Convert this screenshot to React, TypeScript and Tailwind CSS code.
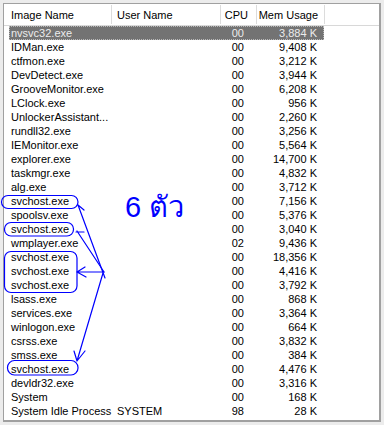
import React from 'react';

type Proc = { name: string; user?: string; cpu: string; mem: string };

const procs: Proc[] = [
  { name: 'nvsvc32.exe', cpu: '00', mem: '3,884 K' },
  { name: 'IDMan.exe', cpu: '00', mem: '9,408 K' },
  { name: 'ctfmon.exe', cpu: '00', mem: '3,212 K' },
  { name: 'DevDetect.exe', cpu: '00', mem: '3,944 K' },
  { name: 'GrooveMonitor.exe', cpu: '00', mem: '6,208 K' },
  { name: 'LClock.exe', cpu: '00', mem: '956 K' },
  { name: 'UnlockerAssistant...', cpu: '00', mem: '2,260 K' },
  { name: 'rundll32.exe', cpu: '00', mem: '3,256 K' },
  { name: 'IEMonitor.exe', cpu: '00', mem: '5,564 K' },
  { name: 'explorer.exe', cpu: '00', mem: '14,700 K' },
  { name: 'taskmgr.exe', cpu: '00', mem: '4,832 K' },
  { name: 'alg.exe', cpu: '00', mem: '3,712 K' },
  { name: 'svchost.exe', cpu: '00', mem: '7,156 K' },
  { name: 'spoolsv.exe', cpu: '00', mem: '5,376 K' },
  { name: 'svchost.exe', cpu: '00', mem: '3,040 K' },
  { name: 'wmplayer.exe', cpu: '02', mem: '9,436 K' },
  { name: 'svchost.exe', cpu: '00', mem: '18,356 K' },
  { name: 'svchost.exe', cpu: '00', mem: '4,416 K' },
  { name: 'svchost.exe', cpu: '00', mem: '3,792 K' },
  { name: 'lsass.exe', cpu: '00', mem: '868 K' },
  { name: 'services.exe', cpu: '00', mem: '3,364 K' },
  { name: 'winlogon.exe', cpu: '00', mem: '664 K' },
  { name: 'csrss.exe', cpu: '00', mem: '3,832 K' },
  { name: 'smss.exe', cpu: '00', mem: '384 K' },
  { name: 'svchost.exe', cpu: '00', mem: '4,476 K' },
  { name: 'devldr32.exe', cpu: '00', mem: '3,316 K' },
  { name: 'System', cpu: '00', mem: '168 K' },
  { name: 'System Idle Process', user: 'SYSTEM', cpu: '98', mem: '28 K' },
];

// hand-drawn markup on top of the list
const Annotations = () => (
  <svg className="absolute left-0 top-0 pointer-events-none" width="384" height="425" viewBox="0 0 384 425">
    <g fill="none" stroke="#0000ff" strokeWidth="1.2" strokeLinecap="round" strokeLinejoin="round">
      <rect x="1.5" y="195.5" width="76.5" height="13" rx="6.5" />
      <rect x="4.5" y="222.5" width="69" height="13.5" rx="6.5" />
      <rect x="4.5" y="251.5" width="72.5" height="41" rx="6.5" />
      <rect x="7.5" y="360.5" width="70.5" height="14.5" rx="7" />

      <path d="M105 278 L78 205 M78 205 L84 210" />
      <path d="M104 272 L77 231 M76 232 L84 232" />
      <path d="M104 272 L77 272 M77 272 L85 267 M77 272 L86 277" />
      <path d="M103 273 L77 361 M77 361 L74 351 M77 361 L85 351" />
    </g>
  </svg>
);

export default function App() {
  return (
    <div
      className="relative w-[384px] h-[425px] bg-[#ececec] pt-[3px] pl-[3px] overflow-hidden"
      style={{ fontFamily: '"Liberation Sans", Arial, sans-serif' }}
    >
      <div className="w-[378px] h-[419px] bg-white border-t border-l border-r-2 border-b-2 border-[#a0a0a0] text-[11px] text-black">
        <div className="flex h-[22px] border-b border-[#d8d8d8] items-stretch">
          <div className="w-[108px] pl-[7px] leading-[21px] border-r border-[#dcdcdc] my-[1px]">Image Name</div>
          <div className="w-[109px] pl-[5px] leading-[21px] border-r border-[#dcdcdc] my-[1px]">User Name</div>
          <div className="w-[36px] pr-[8px] text-right leading-[21px] border-r border-[#dcdcdc] my-[1px]">CPU</div>
          <div className="w-[68px] pr-[6px] text-right leading-[21px] border-r border-[#dcdcdc] my-[1px]">Mem Usage</div>
        </div>
        <div>
          {procs.map((p, i) => (
            <div key={i} className="flex h-[14px] leading-[14px]">
              <div
                className={
                  i === 0
                    ? 'ml-[5px] w-[315px] flex bg-[#737373] text-[#ececec] outline-1 outline-dotted outline-[#b8b8b8] -outline-offset-1'
                    : 'ml-[5px] w-[315px] flex'
                }
              >
                <div className="w-[102px] pl-[2px] whitespace-nowrap">{p.name}</div>
                <div className="w-[109px] pl-[6px]">{p.user ?? ''}</div>
                <div className="w-[36px] pr-[12px] text-right">{p.cpu}</div>
                <div className="w-[68px] pr-[7px] text-right">{p.mem}</div>
              </div>
            </div>
          ))}
        </div>
      </div>
      <span
        className="absolute left-[125px] top-[190px] text-[29px] leading-[34px] text-[#0000ff] whitespace-nowrap"
        style={{ fontFamily: '"Liberation Sans", "DejaVu Sans", "Noto Sans", sans-serif' }}
      >
        6 ตัว
      </span>
      <Annotations />
    </div>
  );
}
